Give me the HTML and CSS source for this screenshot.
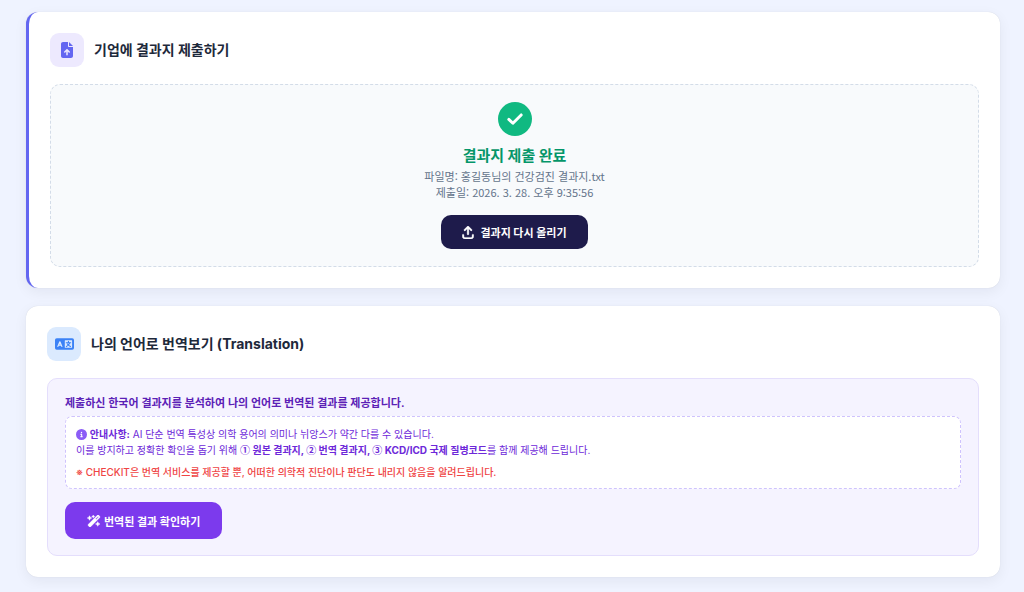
FILE: index.html
```html
<!DOCTYPE html>
<html lang="ko">
<head>
    <meta charset="UTF-8">
    <meta name="viewport" content="width=device-width, initial-scale=1.0">
    <title>CHECKIT</title>
    <link rel="stylesheet" href="styles.css">
</head>
<body>
    <main class="page">
        <!-- 결과지 제출 -->
        <section class="card card-submit">
            <div class="card-header">
                <div class="icon-box icon-indigo">
                    <svg width="12" height="16" viewBox="0 0 384 512" fill="currentColor" aria-hidden="true"><path d="M64 0C28.700 0 0 28.700 0 64L0 448c0 35.300 28.700 64 64 64l256 0c35.300 0 64-28.700 64-64l0-288-128 0c-17.700 0-32-14.300-32-32L224 0 64 0zM256 0l0 128 128 0L256 0zM216 408c0 13.300-10.700 24-24 24s-24-10.700-24-24l0-102.100-31 31c-9.400 9.400-24.600 9.400-33.900 0s-9.400-24.600 0-33.900l72-72c9.400-9.400 24.600-9.400 33.900 0l72 72c9.400 9.400 9.400 24.600 0 33.900s-24.600 9.400-33.900 0l-31-31L216 408z"/></svg>
                </div>
                <h2>기업에 결과지 제출하기</h2>
            </div>
            <div class="upload-box">
                <div class="done-icon">
                    <svg width="18" height="18" viewBox="0 0 448 512" fill="none" stroke="currentColor" stroke-width="84" stroke-linecap="round" stroke-linejoin="round" aria-hidden="true"><path d="M48 268L164 376L400 140"/></svg>
                </div>
                <h3>결과지 제출 완료</h3>
                <p>파일명: 홍길동님의 건강검진 결과지.txt</p>
                <p>제출일: 2026. 3. 28. 오후 9:35:56</p>
                <button type="button" class="btn btn-dark">
                    <svg width="12" height="13" viewBox="0 0 448 512" fill="currentColor" stroke="currentColor" stroke-width="14" aria-hidden="true"><path d="M246.600 9.400c-12.500-12.500-32.800-12.500-45.300 0l-128 128c-12.500 12.500-12.500 32.800 0 45.300s32.800 12.500 45.300 0L192 109.300 192 320c0 17.700 14.300 32 32 32s32-14.300 32-32l0-210.700 73.400 73.400c12.500 12.500 32.800 12.500 45.300 0s12.500-32.800 0-45.300l-128-128zM64 352c0-17.700-14.300-32-32-32s-32 14.300-32 32l0 64c0 53 43 96 96 96l256 0c53 0 96-43 96-96l0-64c0-17.700-14.300-32-32-32s-32 14.300-32 32l0 64c0 17.700-14.300 32-32 32L96 448c-17.700 0-32-14.300-32-32l0-64z"/></svg>
                    결과지 다시 올리기
                </button>
            </div>
        </section>

        <!-- 번역 -->
        <section class="card">
            <div class="card-header">
                <div class="icon-box icon-blue">
                    <svg width="19" height="16" viewBox="0 0 640 512" aria-hidden="true">
                        <rect y="64" width="640" height="384" rx="58" fill="currentColor"/>
                        <rect x="330" y="128" width="246" height="256" rx="10" fill="#dbeafe"/>
                        <path d="M98 336l66-152 66 152M126 294h76" fill="none" stroke="#dbeafe" stroke-width="42" stroke-linecap="round" stroke-linejoin="round"/>
                        <path d="M453 164v40M378 212h150M500 212c-20 64-60 104-116 130M416 256c24 36 62 64 104 84" fill="none" stroke="currentColor" stroke-width="38" stroke-linecap="round"/>
                    </svg>
                </div>
                <h2>나의 언어로 번역보기 (Translation)</h2>
            </div>
            <div class="translate-box">
                <h4>제출하신 한국어 결과지를 분석하여 나의 언어로 번역된 결과를 제공합니다.</h4>
                <div class="notice">
                    <p><svg class="info-icon" width="11" height="11" viewBox="0 0 512 512" fill="currentColor" aria-hidden="true"><path d="M256 512A256 256 0 1 0 256 0a256 256 0 1 0 0 512zM216 336l24 0 0-64-24 0c-13.300 0-24-10.700-24-24s10.700-24 24-24l48 0c13.300 0 24 10.700 24 24l0 88 8 0c13.300 0 24 10.700 24 24s-10.700 24-24 24l-80 0c-13.300 0-24-10.700-24-24s10.700-24 24-24zm40-208a32 32 0 1 1 0 64 32 32 0 1 1 0-64z"/></svg> <strong>안내사항:</strong> AI 단순 번역 특성상 의학 용어의 의미나 뉘앙스가 약간 다를 수 있습니다.<br>
                    이를 방지하고 정확한 확인을 돕기 위해 <strong><span class="num">①</span> 원본 결과지, <span class="num">②</span> 번역 결과지, <span class="num">③</span> KCD/ICD 국제 질병코드</strong>를 함께 제공해 드립니다.</p>
                    <p class="warning">※ CHECKIT은 번역 서비스를 제공할 뿐, 어떠한 의학적 진단이나 판단도 내리지 않음을 알려드립니다.</p>
                </div>
                <button type="button" class="btn btn-purple">
                    <svg width="14" height="12" viewBox="0 0 576 512" fill="currentColor" stroke="currentColor" stroke-width="14" aria-hidden="true"><path d="M234.700 42.700L197 56.800c-3 1.100-5 4-5 7.200s2 6.100 5 7.200l37.700 14.100L248.800 123c1.100 3 4 5 7.200 5s6.100-2 7.200-5l14.100-37.700L315 71.200c3-1.100 5-4 5-7.200s-2-6.100-5-7.200L277.300 42.700 263.200 5c-1.100-3-4-5-7.200-5s-6.100 2-7.200 5L234.700 42.700zM46.100 395.400c-18.700 18.700-18.700 49.100 0 67.900l34.600 34.600c18.700 18.700 49.100 18.700 67.900 0L529.900 116.500c18.700-18.700 18.700-49.100 0-67.900L495.300 14.100c-18.700-18.700-49.100-18.700-67.900 0L46.100 395.400zM484.600 82.600l-105 105-23.300-23.300 105-105 23.300 23.300zM7.500 117.200C3 118.900 0 123.200 0 128s3 9.100 7.500 10.800L64 160l21.200 56.500c1.700 4.500 6 7.500 10.800 7.500s9.100-3 10.800-7.500L128 160l56.500-21.200c4.500-1.700 7.500-6 7.500-10.800s-3-9.100-7.500-10.800L128 96 106.800 39.500C105.100 35 100.800 32 96 32s-9.100 3-10.800 7.500L64 96 7.500 117.200zm352 256c-4.500 1.700-7.500 6-7.500 10.800s3 9.100 7.500 10.800L416 416l21.200 56.500c1.700 4.500 6 7.500 10.800 7.500s9.100-3 10.800-7.500L480 416l56.500-21.200c4.500-1.700 7.500-6 7.500-10.800s-3-9.100-7.500-10.800L480 352l-21.200-56.500c-1.700-4.500-6-7.500-10.800-7.500s-9.100 3-10.800 7.500L416 352l-56.500 21.200z"/></svg>
                    번역된 결과 확인하기
                </button>
            </div>
        </section>
    </main>
</body>
</html>
```
FILE: styles.css
```css
* {
    box-sizing: border-box;
    margin: 0;
    padding: 0;
}

body {
    font-family: Inter, "Noto Sans CJK KR", sans-serif;
    background: #eff3ff;
    color: #1e293b;
}

.page {
    display: flex;
    flex-direction: column;
    gap: 18px;
    padding: 12px 24px 12px 26px;
}

.card {
    background: #fff;
    border-radius: 12px;
    padding: 21px;
    box-shadow: 0 0 1px rgba(15, 23, 42, 0.15), 0 4px 14px rgba(15, 23, 42, 0.06);
}

.card-submit {
    border-left: 3px solid #6366f1;
}

.card-header {
    display: flex;
    align-items: center;
    gap: 10px;
    margin-bottom: 17px;
}

.card-header h2 {
    font-size: 14px;
    line-height: 20px;
    font-weight: 700;
}

.icon-box {
    display: flex;
    align-items: center;
    justify-content: center;
    width: 34px;
    height: 34px;
    border-radius: 9px;
}

.icon-indigo {
    background: #ede9fe;
    color: #6366f1;
}

.icon-blue {
    background: #dbeafe;
    color: #3b82f6;
}

.upload-box {
    display: flex;
    flex-direction: column;
    align-items: center;
    padding: 17px;
    background: #f8fafc;
    border: 1px dashed #d3dce8;
    border-radius: 10px;
    text-align: center;
}

.done-icon {
    display: flex;
    align-items: center;
    justify-content: center;
    width: 34px;
    height: 34px;
    margin-bottom: 10px;
    border-radius: 50%;
    background: #10b981;
    color: #fff;
}

.upload-box h3 {
    margin-bottom: 2px;
    font-size: 15px;
    line-height: 20px;
    font-weight: 700;
    color: #059669;
}

.upload-box p {
    font-family: "Noto Sans CJK KR", sans-serif;
    font-size: 11px;
    line-height: 16px;
    color: #64748b;
}

.btn {
    display: inline-flex;
    align-items: center;
    justify-content: center;
    padding: 0 21px;
    border: none;
    border-radius: 10px;
    color: #fff;
    font-family: inherit;
    font-size: 11px;
    font-weight: 700;
    cursor: pointer;
}

.btn-dark {
    gap: 6px;
    height: 34px;
    margin-top: 15px;
    background: #1e1b4b;
}

.btn-purple {
    gap: 3px;
    height: 37px;
    padding: 0 22px;
    background: #7c3aed;
}

.translate-box {
    padding: 14px 17px 16px;
    background: #f5f3ff;
    border: 1px solid #e4defc;
    border-radius: 10px;
}

.translate-box h4 {
    margin-bottom: 3px;
    font-size: 11px;
    line-height: 20px;
    font-weight: 600;
    color: #5b21b6;
}

.notice {
    margin-bottom: 13px;
    padding: 9px 10px 8px;
    background: #fff;
    border: 1px dashed #cfc3fd;
    border-radius: 7px;
    font-size: 10px;
    line-height: 16px;
    color: #6d28d9;
}

.notice .warning {
    margin-top: 6px;
    font-weight: 500;
    color: #ef4444;
}

.notice .num {
    font-family: "Noto Sans CJK KR", sans-serif;
}

.info-icon {
    vertical-align: -2px;
    color: #8b5cf6;
}
```
